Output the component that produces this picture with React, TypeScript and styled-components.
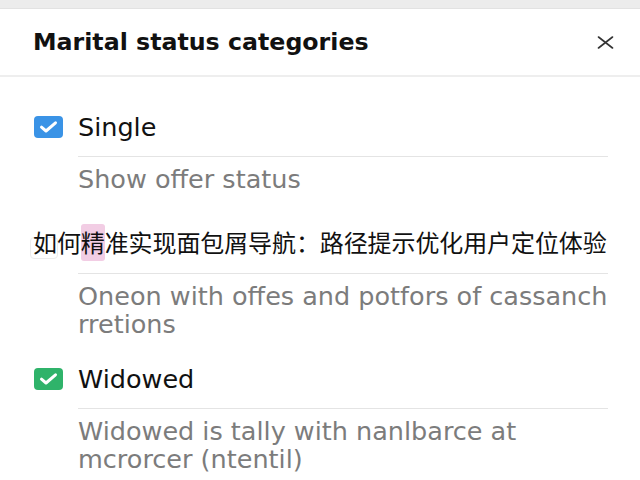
import React from "react";
import styled, { createGlobalStyle } from "styled-components";

const Global = createGlobalStyle`
  html, body { margin: 0; padding: 0; background: #ffffff; }
  body { font-family: "DejaVu Sans", "Noto Sans", sans-serif; }
`;

const Page = styled.div`
  width: 640px;
  height: 480px;
  overflow: hidden;
  background: #ececec;
  padding-top: 8px;
  box-sizing: border-box;
`;

const Panel = styled.div`
  background: #ffffff;
  height: 100%;
  border-top: 1px solid #e2e2e2;
`;

const Header = styled.div`
  height: 68px;
  display: flex;
  align-items: center;
  justify-content: space-between;
  padding: 0 26px 0 33px;
  border-bottom: 2px solid #eeeeee;
  box-sizing: border-box;
`;

const Title = styled.h1`
  margin: 0;
  font-family: "DejaVu Sans", sans-serif;
  font-weight: 700;
  font-size: 23.7px;
  color: #111111;
`;

const Close = styled.button`
  border: none;
  background: none;
  padding: 0;
  width: 18px;
  height: 14px;
  display: flex;
  align-items: center;
  justify-content: center;
  cursor: pointer;
`;

const List = styled.div`
  padding: 30px 32px 0 34px;
`;

const Item = styled.div<{ $gap?: number }>`
  margin-bottom: ${(p) => p.$gap ?? 21}px;
`;

const Row = styled.div<{ $after?: number }>`
  position: relative;
  display: flex;
  align-items: center;
  height: 40px;
  margin-bottom: ${(p) => p.$after ?? 9}px;
`;

const Box = styled.span<{ $color: string }>`
  width: 29px;
  height: 22px;
  border-radius: 4px;
  background: ${(p) => p.$color};
  display: flex;
  align-items: center;
  justify-content: center;
  margin-right: 15px;
  flex-shrink: 0;
`;

const GhostBox = styled.span`
  position: absolute;
  left: -4px;
  top: 16px;
  width: 26px;
  height: 20px;
  border-radius: 4px;
  border: 1px solid #ececec;
  z-index: 0;
`;

const Label = styled.span`
  font-family: "DejaVu Sans", sans-serif;
  font-size: 25.5px;
  color: #111111;
`;

const CjkLabel = styled.span`
  position: relative;
  z-index: 1;
  margin-left: -1px;
  font-family: "Noto Sans CJK SC", sans-serif;
  font-size: 24px;
  letter-spacing: -0.1px;
  color: #111111;
`;

const Mark = styled.span`
  background: #f2cde4;
  border-radius: 3px;
  padding-bottom: 2px;
`;

const Body = styled.div`
  margin-left: 44px;
  border-top: 1px solid #e4e4e4;
  padding-top: 8px;
`;

const Desc = styled.p`
  margin: 0;
  font-family: "DejaVu Sans", sans-serif;
  font-size: 25.5px;
  line-height: 28px;
  color: #7c7c7c;
`;

const Check = () => (
  <svg width="19" height="14" viewBox="0 0 19 14">
    <path d="M2.5 7.2 L7 11 L16.5 2.8" fill="none" stroke="#fff" strokeWidth="3" strokeLinecap="round" strokeLinejoin="round" />
  </svg>
);

export default function App() {
  return (
    <>
      <Global />
      <Page>
        <Panel>
          <Header>
            <Title>Marital status categories</Title>
            <Close aria-label="Close">
              <svg width="17" height="13" viewBox="0 0 17 13">
                <path d="M1.5 1 L15.5 12 M15.5 1 L1.5 12" stroke="#333" strokeWidth="1.6" strokeLinecap="round" />
              </svg>
            </Close>
          </Header>
          <List>
            <Item $gap={28}>
              <Row>
                <Box $color="#3a93e6"><Check /></Box>
                <Label>Single</Label>
              </Row>
              <Body>
                <Desc>Show offer status</Desc>
              </Body>
            </Item>
            <Item>
              <Row $after={12}>
                <GhostBox />
                <CjkLabel>
                  如何<Mark>精</Mark>准实现面包屑导航：路径提示优化用户定位体验
                </CjkLabel>
              </Row>
              <Body>
                <Desc>Oneon with offes and potfors of cassanch rretions</Desc>
              </Body>
            </Item>
            <Item>
              <Row>
                <Box $color="#2fb36a"><Check /></Box>
                <Label>Widowed</Label>
              </Row>
              <Body>
                <Desc>Widowed is tally with nanlbarce at mcrorcer (ntentil)</Desc>
              </Body>
            </Item>
          </List>
        </Panel>
      </Page>
    </>
  );
}
